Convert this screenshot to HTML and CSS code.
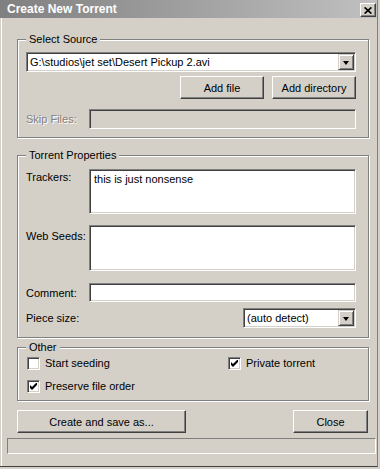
FILE: index.html
```
<!DOCTYPE html>
<html lang="en">
<head>
  <meta charset="UTF-8" />
  <title>Create New Torrent</title>
  <link rel="stylesheet" href="styles.css">
</head>
<body>
  <div class="window">
    <div class="titlebar">
      <span class="title">Create New Torrent</span>
      <div class="close-btn">
        <svg width="8" height="7" viewBox="0 0 8 7"><path d="M0.6 0.4 L7.4 6.6 M7.4 0.4 L0.6 6.6" stroke="#000" stroke-width="1.7" fill="none"/></svg>
      </div>
    </div>

    <div class="panel">
      <fieldset class="group source">
        <legend>Select Source</legend>
        <div class="combo">
          <span class="combo-text">G:\studios\jet set\Desert Pickup 2.avi</span>
          <span class="combo-arrow"><i></i></span>
        </div>
        <div class="btn-row">
          <button class="btn btn-add">Add file</button>
          <button class="btn btn-add">Add directory</button>
        </div>
        <div class="row skip">
          <label class="disabled">Skip Files:</label>
          <input type="text" class="field" disabled />
        </div>
      </fieldset>

      <fieldset class="group props">
        <legend>Torrent Properties</legend>
        <div class="row top">
          <label class="lbl-trackers">Trackers:</label>
          <textarea class="field trackers">this is just nonsense</textarea>
        </div>
        <div class="row top">
          <label class="lbl-seeds">Web Seeds:</label>
          <textarea class="field seeds"></textarea>
        </div>
        <div class="row comment">
          <label>Comment:</label>
          <input type="text" class="field" />
        </div>
        <div class="row piece">
          <label>Piece size:</label>
          <div class="combo small">
            <span class="combo-text">(auto detect)</span>
            <span class="combo-arrow"><i></i></span>
          </div>
        </div>
      </fieldset>

      <fieldset class="group other">
        <legend>Other</legend>
        <div class="checks">
          <div class="check"><span class="box"></span>Start seeding</div>
          <div class="check"><span class="box"><svg width="7" height="7" viewBox="0 0 7 7"><path d="M0 2 L2 4 L6 0 L7 0 L7 2 L2 7 L0 5 Z" fill="#000"/></svg></span>Private torrent</div>
          <div class="check"><span class="box"><svg width="7" height="7" viewBox="0 0 7 7"><path d="M0 2 L2 4 L6 0 L7 0 L7 2 L2 7 L0 5 Z" fill="#000"/></svg></span>Preserve file order</div>
        </div>
      </fieldset>

      <div class="actions">
        <button class="btn btn-create">Create and save as...</button>
        <button class="btn btn-close">Close</button>
      </div>
    </div>

    <div class="status"></div>
  </div>
</body>
</html>
```

FILE: styles.css
```
body {
  margin: 0;
  background: #d4d0c8;
  font-family: "Liberation Sans", Arial, sans-serif;
  font-size: 11px;
  color: #000;
}
.window {
  width: 378px;
  height: 467px;
  box-sizing: border-box;
  background: #d4d0c8;
  border-right: 1px solid #808080;
  border-bottom: 1px solid #404040;
  box-shadow: inset 1px 0 0 #d4d0c8, inset 2px 0 0 #fff;
}
.titlebar {
  height: 18px;
  width: 377px;
  background: linear-gradient(to right, #808080, #c0c0c0);
  display: flex;
  align-items: flex-start;
  justify-content: space-between;
}
.title {
  color: #fff;
  font-weight: bold;
  font-size: 12px;
  line-height: 18px;
  padding-left: 7px;
}
.close-btn {
  width: 16px;
  height: 14px;
  box-sizing: border-box;
  margin-top: 3px;
  margin-right: 1px;
  background: #d4d0c8;
  border: 1px solid;
  border-color: #fff #404040 #404040 #fff;
  box-shadow: inset -1px -1px 0 #808080;
  display: flex;
  align-items: center;
  justify-content: center;
}
.panel {
  padding-left: 17px;
}
.group {
  width: 352px;
  box-sizing: border-box;
  margin: 0;
  padding: 6px 12px 8px 8px;
  border: 1px solid #808080;
  box-shadow: 1px 1px 0 #fff, inset 1px 1px 0 #fff;
  min-inline-size: 0;
}
.group legend {
  padding: 0 3px;
  line-height: 13px;
  background: #d4d0c8;
}
.source {
  margin-top: 15px;
}
.props {
  margin-top: 11px;
  padding-top: 7px;
  padding-bottom: 9px;
}
.other {
  margin-top: 3px;
  padding-top: 3px;
  padding-bottom: 7px;
}
.combo {
  height: 20px;
  box-sizing: border-box;
  background: #fff;
  border: 1px solid;
  border-color: #808080 #fff #fff #808080;
  box-shadow: inset 1px 1px 0 #404040, inset -1px -1px 0 #d4d0c8;
  display: flex;
  align-items: center;
  padding: 1px 2px 1px 3px;
}
.combo-text {
  flex: 1;
  line-height: 14px;
}
.combo-arrow {
  width: 16px;
  height: 16px;
  box-sizing: border-box;
  background: #d4d0c8;
  border: 1px solid;
  border-color: #d4d0c8 #404040 #404040 #d4d0c8;
  box-shadow: inset 1px 1px 0 #fff, inset -1px -1px 0 #808080;
  display: flex;
  align-items: center;
  justify-content: center;
  margin-right: -1px;
}
.combo-arrow i {
  width: 0;
  height: 0;
  border-left: 3.5px solid transparent;
  border-right: 3.5px solid transparent;
  border-top: 4px solid #000;
  margin-top: 1px;
}
.combo.small {
  width: 113px;
  margin-left: auto;
}
.btn {
  font-family: "Liberation Sans", Arial, sans-serif;
  font-size: 11px;
  color: #000;
  height: 23px;
  background: #d4d0c8;
  border: 1px solid;
  border-color: #fff #404040 #404040 #fff;
  box-shadow: inset -1px -1px 0 #808080;
  padding: 0;
  margin: 0;
}
.btn-row {
  display: flex;
  justify-content: flex-end;
  gap: 8px;
  margin-top: 4px;
}
.btn-add {
  width: 84px;
}
.row {
  display: flex;
  align-items: center;
}
.row label {
  width: 63px;
  flex: none;
}
.row.top {
  align-items: flex-start;
}
.field {
  flex: 1;
  box-sizing: border-box;
  margin: 0;
  font-family: "Liberation Sans", Arial, sans-serif;
  font-size: 11px;
  color: #000;
  background: #fff;
  border: 1px solid;
  border-color: #808080 #fff #fff #808080;
  box-shadow: inset 1px 1px 0 #404040, inset -1px -1px 0 #d4d0c8;
  padding: 2px 4px;
  outline: none;
  resize: none;
}
.skip {
  margin-top: 10px;
}
.skip .field {
  height: 20px;
  background: #d4d0c8;
}
.disabled {
  color: #808080;
  text-shadow: 1px 1px 0 #fff;
}
.trackers {
  height: 45px;
  line-height: 14px;
}
.seeds {
  height: 46px;
  margin-top: 11px;
}
.lbl-trackers {
  padding-top: 2px;
}
.lbl-seeds {
  margin-top: 11px;
  padding-top: 5px;
}
.comment {
  margin-top: 12px;
}
.comment .field {
  height: 19px;
}
.piece {
  margin-top: 6px;
}
.checks {
  display: grid;
  grid-template-columns: 201px 1fr;
  row-gap: 10px;
  padding-left: 1px;
}
.check {
  display: flex;
  align-items: center;
  gap: 5px;
  height: 13px;
  line-height: 13px;
}
.box {
  width: 13px;
  height: 13px;
  box-sizing: border-box;
  background: #fff;
  border: 1px solid;
  border-color: #808080 #fff #fff #808080;
  box-shadow: inset 1px 1px 0 #404040, inset -1px -1px 0 #d4d0c8;
  display: flex;
  align-items: center;
  justify-content: center;
}
.actions {
  width: 351px;
  display: flex;
  justify-content: space-between;
  margin-top: 9px;
}
.btn-create {
  width: 169px;
}
.btn-close {
  width: 75px;
}
.status {
  width: 369px;
  height: 16px;
  box-sizing: border-box;
  margin: 5px 0 0 7px;
  border: 1px solid;
  border-color: #808080 #fff #fff #808080;
}
```
